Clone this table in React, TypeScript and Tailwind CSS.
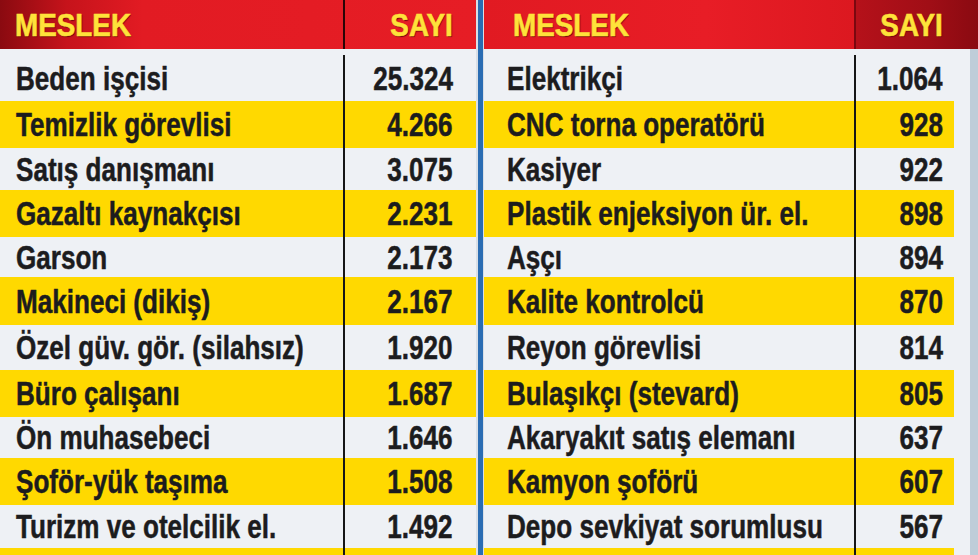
import clsx from "clsx";

type Row = { name: string; n: string; h: string };

const left: Row[] = [
  { name: "Beden işçisi", n: "25.324", h: "h-[52px] pt-[6px]" },
  { name: "Temizlik görevlisi", n: "4.266", h: "h-[47px]" },
  { name: "Satış danışmanı", n: "3.075", h: "h-[42px]" },
  { name: "Gazaltı kaynakçısı", n: "2.231", h: "h-[47px]" },
  { name: "Garson", n: "2.173", h: "h-[40px]" },
  { name: "Makineci (dikiş)", n: "2.167", h: "h-[48px]" },
  { name: "Özel güv. gör. (silahsız)", n: "1.920", h: "h-[45px]" },
  { name: "Büro çalışanı", n: "1.687", h: "h-[47px]" },
  { name: "Ön muhasebeci", n: "1.646", h: "h-[41px]" },
  { name: "Şoför-yük taşıma", n: "1.508", h: "h-[47px]" },
  { name: "Turizm ve otelcilik el.", n: "1.492", h: "h-[43px]" },
];

const right: Row[] = [
  { name: "Elektrikçi", n: "1.064", h: "h-[52px] pt-[6px]" },
  { name: "CNC torna operatörü", n: "928", h: "h-[47px]" },
  { name: "Kasiyer", n: "922", h: "h-[42px]" },
  { name: "Plastik enjeksiyon ür. el.", n: "898", h: "h-[47px]" },
  { name: "Aşçı", n: "894", h: "h-[40px]" },
  { name: "Kalite kontrolcü", n: "870", h: "h-[48px]" },
  { name: "Reyon görevlisi", n: "814", h: "h-[45px]" },
  { name: "Bulaşıkçı (stevard)", n: "805", h: "h-[47px]" },
  { name: "Akaryakıt satış elemanı", n: "637", h: "h-[41px]" },
  { name: "Kamyon şoförü", n: "607", h: "h-[47px]" },
  { name: "Depo sevkiyat sorumlusu", n: "567", h: "h-[43px]" },
];

function Head({ children, end }: { children: string; end?: boolean }) {
  return (
    <span
      className={clsx(
        "inline-block whitespace-nowrap text-[32px] font-bold leading-none text-[#ffe23a] scale-x-[0.87] [-webkit-text-stroke:0.6px_#ffe23a] [text-shadow:1px_1px_1px_#6a0408]",
        end ? "origin-right" : "origin-left"
      )}
    >
      {children}
    </span>
  );
}

function Cell({ children, end }: { children: string; end?: boolean }) {
  return (
    <span
      className={clsx(
        "inline-block whitespace-nowrap text-[33px] font-bold leading-none scale-x-[0.79] [-webkit-text-stroke:0.5px_#1c1c1e]",
        end ? "origin-right" : "origin-left"
      )}
    >
      {children}
    </span>
  );
}

export default function App() {
  return (
    <div className="flex h-[555px] w-[978px] overflow-hidden bg-[#bfcdd9] font-['Liberation_Sans',Arial,sans-serif] text-[#1c1c1e]">
      {/* sol tablo */}
      <div className="flex w-[476px] flex-col bg-[#eef1f5]">
        <div className="flex h-[49px] shrink-0 bg-[linear-gradient(90deg,#8a0a10_0%,#c6131b_14%,#e21b23_30%,#e61d25_100%)]">
          <div className="flex w-[343px] items-center pl-[15px]">
            <Head>MESLEK</Head>
          </div>
          <div className="w-[2px] bg-[#2a0405]" />
          <div className="flex flex-1 items-center justify-end pr-[23px]">
            <Head end>SAYI</Head>
          </div>
        </div>
        {left.map((r, i) => (
          <div key={r.name} className={clsx("flex shrink-0", r.h, i % 2 ? "bg-[#ffd900]" : "bg-[#eef1f5]")}>
            <div className="flex w-[343px] items-center pl-[16px]">
              <Cell>{r.name}</Cell>
            </div>
            <div className="w-[2px] bg-[#161616]" />
            <div className="flex flex-1 items-center justify-end pr-[23px]">
              <Cell end>{r.n}</Cell>
            </div>
          </div>
        ))}
        <div className="flex flex-1 bg-[#ffd900]">
          <div className="w-[343px]" />
          <div className="w-[2px] bg-[#161616]" />
        </div>
      </div>

      {/* ayirici */}
      <div className="flex w-[8px] justify-center bg-[#d9dfe6]">
        <div className="w-[5px] bg-[#2a6db3]" />
      </div>

      {/* sag tablo */}
      <div className="flex w-[494px] flex-col">
        <div className="flex h-[49px] shrink-0">
          <div className="flex w-[370px] items-center bg-[linear-gradient(90deg,#e11a22_0%,#e81d26_60%,#dc1820_100%)] pl-[29px]">
            <Head>MESLEK</Head>
          </div>
          <div className="w-[2px] bg-[#7a0810]" />
          <div className="flex flex-1 items-center justify-end bg-[linear-gradient(90deg,#b5111a_0%,#a00e16_60%,#8a0a11_100%)] pr-[35px]">
            <Head end>SAYI</Head>
          </div>
        </div>
        <div className="flex w-[486px] flex-1 flex-col bg-[#eef1f5]">
          {right.map((r, i) => (
            <div key={r.name} className={clsx("flex shrink-0", r.h)}>
              <div className={clsx("flex w-[470px]", i % 2 ? "bg-[#ffd900]" : "bg-[#eef1f5]")}>
                <div className="flex w-[370px] items-center pl-[23px]">
                  <Cell>{r.name}</Cell>
                </div>
                <div className="w-[2px] bg-[#161616]" />
                <div className="flex flex-1 items-center justify-end pr-[11px]">
                  <Cell end>{r.n}</Cell>
                </div>
              </div>
            </div>
          ))}
          <div className="flex flex-1">
            <div className="flex w-[470px] bg-[#ffd900]">
              <div className="w-[370px]" />
              <div className="w-[2px] bg-[#161616]" />
            </div>
          </div>
        </div>
      </div>
    </div>
  );
}
